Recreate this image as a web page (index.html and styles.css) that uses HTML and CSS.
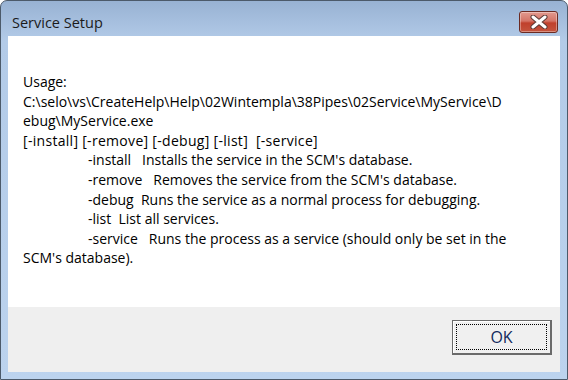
FILE: index.html
```html
<!DOCTYPE html>
<html lang="en">
<head>
    <meta charset="UTF-8">
    <title>Service Setup</title>
    <link rel="stylesheet" href="styles.css">
</head>
<body>
    <div class="window">
        <div class="titlebar">
            <span class="title">Service Setup</span>
            <div class="close">
                <svg width="20" height="14" viewBox="0 0 20 14">
                    <path d="M4 2 L16 12 M16 2 L4 12" stroke="#5a3a36" stroke-width="5" stroke-linecap="round"/>
                    <path d="M4 2 L16 12 M16 2 L4 12" stroke="#ffffff" stroke-width="3" stroke-linecap="round"/>
                </svg>
            </div>
        </div>
        <div class="client">
            <div class="message">
                <div class="line">Usage:</div>
                <div class="line">C:\selo\vs\CreateHelp\Help\02Wintempla\38Pipes\02Service\MyService\D</div>
                <div class="line">ebug\MyService.exe</div>
                <div class="line args">[-install] [-remove] [-debug] [-list]  [-service]</div>
                <div class="line opt">-install   Installs the service in the SCM's database.</div>
                <div class="line opt">-remove   Removes the service from the SCM's database.</div>
                <div class="line opt">-debug  Runs the service as a normal process for debugging.</div>
                <div class="line opt">-list  List all services.</div>
                <div class="line opt">-service   Runs the process as a service (should only be set in the</div>
                <div class="line">SCM's database).</div>
            </div>
            <div class="footer">
                <button class="ok"><span class="focus">OK</span></button>
            </div>
        </div>
    </div>
</body>
</html>
```

FILE: styles.css
```css
body {
    margin: 0;
    background: #ffffff;
    font-family: "Open Sans", "Noto Sans", sans-serif;
}
.window {
    width: 568px;
    height: 380px;
    box-sizing: border-box;
    border: 1px solid #4c5a6a;
    border-radius: 7px 7px 0 0;
    background: linear-gradient(#98b2d3, #b3cbe8 40px, #bcd3ee);
    padding: 0 7px 7px 7px;
    display: flex;
    flex-direction: column;
}
.titlebar {
    height: 35px;
    display: flex;
    align-items: flex-start;
    justify-content: space-between;
}
.title {
    margin: 13px 0 0 4px;
    font-size: 14.5px;
    line-height: 18px;
    color: #1b1b1b;
}
.close {
    margin: 10px 2px 0 0;
    width: 39px;
    height: 22px;
    box-sizing: border-box;
    border: 1px solid #6b2a22;
    border-radius: 3px;
    background: linear-gradient(#e29a8f, #d47466 45%, #c0402c 55%, #c4543e);
    box-shadow: inset 0 0 0 1px rgba(255, 255, 255, 0.35);
    display: flex;
    align-items: center;
    justify-content: center;
}
.client {
    flex: 1;
    background: #ffffff;
    display: flex;
    flex-direction: column;
}
.message {
    flex: 1;
    padding: 36px 0 0 15px;
    font-size: 14px;
    line-height: 19.6px;
    color: #000000;
}
.line {
    white-space: pre;
}
.args {
    letter-spacing: 0.3px;
}
.opt {
    padding-left: 65px;
}
.footer {
    height: 65px;
    background: #efefef;
    display: flex;
    justify-content: flex-end;
    align-items: flex-start;
    padding: 13px 8px 0 0;
    box-sizing: border-box;
}
.ok {
    width: 100px;
    height: 35px;
    padding: 3px;
    border: 1px solid #6a6a6a;
    border-right-width: 2px;
    border-bottom-width: 2px;
    background: #f0f0f0;
    box-shadow: inset 1px 1px 0 #ffffff;
    font-family: "Open Sans", sans-serif;
    font-size: 16px;
    color: #102a5c;
    display: flex;
}
.focus {
    flex: 1;
    border: 1px dotted #000000;
    display: flex;
    align-items: center;
    justify-content: center;
}
```
